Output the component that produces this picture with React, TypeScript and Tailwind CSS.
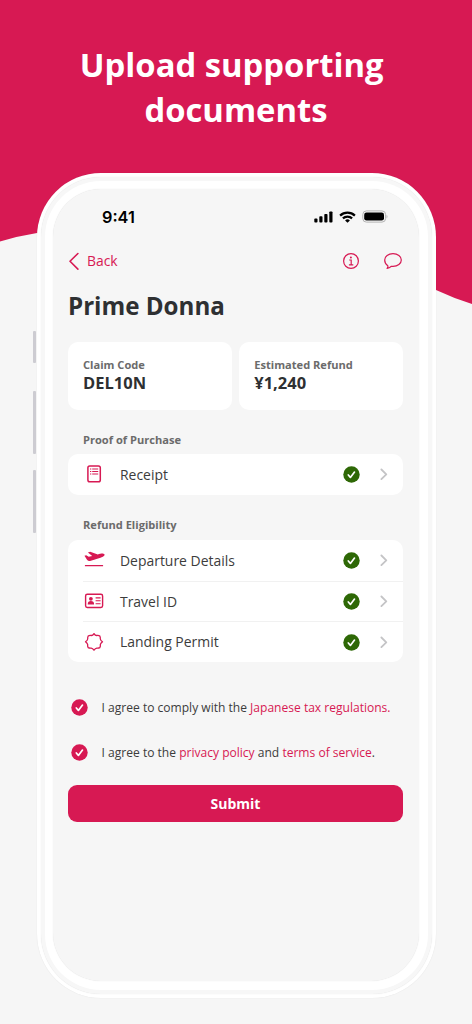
import React from 'react'

interface RowProps {
    icon: React.ReactNode;
    label: string;
    divider?: boolean;
}

const CheckCircle = ({ className }: { className: string }) => (
    <svg viewBox="0 0 17 17" className={`size-[17px] shrink-0 ${className}`}>
        <circle cx="8.5" cy="8.5" r="8.2" fill="currentColor" />
        <path d="M5.3 9l2.1 2.4 4.1-5.3" fill="none" stroke="#fff" strokeWidth="1.7" strokeLinecap="round" strokeLinejoin="round" />
    </svg>
)

const ChevronIcon = () => (
    <svg viewBox="0 0 8 12" className="ml-5 h-3 w-2 shrink-0 text-[#c4c4c6]">
        <path d="M1.4 1.5L6.3 6.3l-4.9 4.8" fill="none" stroke="currentColor" strokeWidth="1.8" strokeLinecap="round" strokeLinejoin="round" />
    </svg>
)

const ReceiptIcon = () => (
    <svg viewBox="0 0 22 20" className="h-5 w-[22px]" fill="none" stroke="currentColor">
        <rect x="4.9" y="2" width="12.4" height="15.8" rx="1.8" strokeWidth="1.5" />
        <path d="M7 5h1.3M7 7.5h1.3M7 10h1.3M9.2 5h6M9.2 7.5h6M9.2 10h6" strokeWidth="1.2" />
    </svg>
)

const DepartureIcon = () => (
    <svg viewBox="0 0 22 20" className="h-5 w-[22px]" fill="currentColor">
        <path d="M1.500 5.800l1.700-.5 2.500 1.500 3.500-.8-4.300-3.500 2.300-.8 7.600 2.900c1.900-.6 4.100-1.200 5.600-.9 1 .2 1.400.9 1.100 1.600-.5 1.200-2.600 2-4 2.400L7.900 10.700c-1.800.5-2.800.3-3.900-.9z" />
        <rect x="1.900" y="14.900" width="18.200" height="1.400" rx=".4" />
    </svg>
)

const IdCardIcon = () => (
    <svg viewBox="0 0 22 20" className="h-5 w-[22px]" fill="none" stroke="currentColor">
        <rect x="2.600" y="3.300" width="17" height="13.200" rx="1.700" strokeWidth="1.400" />
        <circle cx="7.900" cy="7.800" r="1.900" fill="currentColor" stroke="none" />
        <path d="M4.700 13.400c0-2.200 1.200-3.300 3.200-3.300s3.200 1.100 3.200 3.300z" fill="currentColor" stroke="none" />
        <path d="M12.600 6.900h5M12.600 9.800h5M12.600 12.700h5" strokeWidth="1.100" />
    </svg>
)

const SealIcon = () => (
    <svg viewBox="0 0 22 20" className="h-5 w-[22px]" fill="none" stroke="currentColor" strokeWidth="1.300" strokeLinejoin="round">
        <path d="M11 1.600Q12.200 3.600 13.800 3.500Q15.500 3.100 16.800 4Q17.500 5.500 17.300 7Q17.600 8.600 19.500 9.800Q17.700 11.200 17.300 12.700Q17.700 14.300 16.800 15.700Q15.400 16.400 13.800 16.100Q12.300 16.300 11 18.200Q9.700 16.300 8.200 16.100Q6.600 16.400 5.200 15.700Q4.300 14.300 4.700 12.700Q4.300 11.200 2.500 9.800Q4.400 8.600 4.700 7Q4.500 5.500 5.200 4Q6.500 3.100 8.200 3.500Q9.800 3.600 11 1.600Z" />
    </svg>
)

const InfoIcon = () => (
    <svg viewBox="0 0 18 18" className="size-[18px]" fill="none" stroke="currentColor">
        <circle cx="9" cy="9" r="7.400" strokeWidth="1.200" />
        <circle cx="8.900" cy="5.400" r="1" fill="currentColor" stroke="none" />
        <path d="M7.200 8h2v4.800M6.900 12.800h4.400" strokeWidth="1.200" />
    </svg>
)

const ChatIcon = () => (
    <svg viewBox="0 0 20 18" className="h-[18px] w-5" fill="none" stroke="currentColor" strokeWidth="1.200" strokeLinejoin="round">
        <path d="M10 1.600c4.700 0 8.300 2.700 8.300 6.300s-3.600 6.500-8.300 6.500c-.7 0-1.100 0-1.600-.1-1.200 1.100-2.800 2-4.300 2.100.7-.9 1-1.700.7-2.700C2.900 12.400 1.700 10.300 1.700 7.900c0-3.600 3.600-6.300 8.300-6.300z" />
    </svg>
)

const StatusBar = () => (
    <div className="flex h-[55px] items-center justify-between pr-[31px] pl-[49px]">
        <span className="pt-px font-['Inter'] text-[16.3px] font-semibold text-black">9:41</span>
        <div className="flex items-center gap-1.5">
            <svg viewBox="0 0 19 12" className="h-3 w-[19px]">
                <rect x="0.300" y="7.500" width="3.200" height="4" rx=".9" />
                <rect x="5.300" y="5.200" width="3.200" height="6.300" rx=".9" />
                <rect x="10.300" y="2.900" width="3.200" height="8.600" rx=".9" />
                <rect x="15.300" y=".4" width="3.200" height="11.100" rx=".9" />
            </svg>
            <svg viewBox="0 0 17 12" className="h-3 w-[17px]" fill="none" stroke="#000" strokeWidth="2.2">
                <path d="M1.100 4.600a10.600 10.600 0 0 1 14.800 0M3.900 7.400a6.700 6.700 0 0 1 9.200 0" />
                <path d="M8.500 11.800L6.100 9.500a3.400 3.400 0 0 1 4.800 0z" fill="#000" stroke="none" />
            </svg>
            <svg viewBox="0 0 26 13" className="h-[13px] w-[26px]">
                <rect x=".8" y=".9" width="22.800" height="11.200" rx="3.600" fill="none" stroke="#b4b4b4" />
                <rect x="2.200" y="2.400" width="19.800" height="8.200" rx="2.300" />
                <path d="M24.600 4.700c1.100.5 1.100 3.200 0 3.700z" fill="#aaa" />
            </svg>
        </div>
    </div>
)

const Row = ({ icon, label, divider }: RowProps) => (
    <div className={`ml-[15px] flex h-[40.8px] items-center pr-[15px] ${divider ? 'border-t border-[#f1f1f1]' : ''}`}>
        <span className="text-[#d71953]">{icon}</span>
        <span className={`ml-[15px] flex-1 text-[13.95px] text-[#3c3c3c] ${divider ? 'pt-px' : 'pt-0.5'}`}>{label}</span>
        <CheckCircle className="text-[#2e6806]" />
        <ChevronIcon />
    </div>
)

const InfoCard = ({ title, value }: { title: string; value: string }) => (
    <div className="flex h-[67.5px] flex-col rounded-[10px] bg-white pt-[14px] pl-[15px] font-bold">
        <span className="text-[11.1px] leading-[17px] text-[#6b6b6b]">{title}</span>
        <span className="text-[16.5px] leading-5 text-[#2e3032]">{value}</span>
    </div>
)

const SectionTitle = ({ children }: { children: React.ReactNode }) => (
    <h2 className="pl-[15px] text-[11.1px] leading-[17px] font-bold text-[#6b6b6b]">{children}</h2>
)

const App = () => {
    return (
        <div className="relative h-[1024px] w-[472px] overflow-hidden bg-[#f6f6f6] font-['Open_Sans',sans-serif]">
            <svg viewBox="0 0 472 320" className="absolute top-0 left-0 h-[320px] w-[472px]">
                <path d="M0 0h472v304q-19-6-36-14L300 238Q170 200 37 233Q18 236 0 241.5z" fill="#d71953" />
            </svg>

            <div className="relative flex flex-col items-center">
                <h1 className="h-[172.5px] pt-[42px] text-center text-[32.8px] leading-[45px] font-bold text-white">
                    Upload supporting&nbsp;<br />documents
                </h1>

                {/* phone frame */}
                <div className="relative w-[399px] rounded-[64px] bg-white p-1 shadow-[0_0_1px_rgba(0,0,0,0.12)]">
                    <div className="absolute top-[158px] -left-[3.5px] h-8 w-[3px] rounded-[1px] bg-[#cdccd2]" />
                    <div className="absolute top-[218px] -left-[3.5px] h-[63px] w-[3px] rounded-[1px] bg-[#cdccd2]" />
                    <div className="absolute top-[297.5px] -left-[3.5px] h-[63px] w-[3px] rounded-[1px] bg-[#cdccd2]" />

                    <div className="rounded-[60px] bg-[#f7f7f7] p-1 shadow-[0_0_1px_rgba(0,0,0,0.15)]">
                        <div className="rounded-[56px] bg-white p-[8.5px]">
                            <div className="h-[792px] rounded-[48px] bg-[#f6f6f6] shadow-[0_0_1px_rgba(0,0,0,0.15)]">
                                <StatusBar />

                                <div className="pr-4 pl-[15px]">
                                    <div className="flex h-[33px] items-center text-[#d71953]">
                                        <svg viewBox="0 0 12 18" className="h-[18px] w-3" fill="none" stroke="currentColor" strokeWidth="1.6" strokeLinecap="round" strokeLinejoin="round">
                                            <path d="M9.9 1.500L2 9.300l7.900 7.800" />
                                        </svg>
                                        <span className="ml-[7px] flex-1 pt-px text-[13.9px]">Back</span>
                                        <InfoIcon />
                                        <span className="ml-[23px] flex">
                                            <ChatIcon />
                                        </span>
                                    </div>

                                    <h2 className="mt-3 text-[24.15px] leading-[34px] font-bold text-[#2e3032]">Prime Donna</h2>

                                    <div className="mt-[19px] grid grid-cols-2 gap-[7.5px]">
                                        <InfoCard title="Claim Code" value="DEL10N" />
                                        <InfoCard title="Estimated Refund" value="¥1,240" />
                                    </div>

                                    <div className="mt-[21.5px]">
                                        <SectionTitle>Proof of Purchase</SectionTitle>
                                        <div className="mt-1.5 rounded-[10px] bg-white">
                                            <Row icon={<ReceiptIcon />} label="Receipt" />
                                        </div>
                                    </div>

                                    <div className="mt-[21.5px]">
                                        <SectionTitle>Refund Eligibility</SectionTitle>
                                        <div className="mt-[6.5px] rounded-[10px] bg-white">
                                            <Row icon={<DepartureIcon />} label="Departure Details" />
                                            <Row icon={<IdCardIcon />} label="Travel ID" divider />
                                            <Row icon={<SealIcon />} label="Landing Permit" divider />
                                        </div>
                                    </div>

                                    <div className="mt-[34px] flex flex-col gap-[22.5px] pl-[3px] text-[12.05px] leading-[22px] text-[#3c3c3c]">
                                        <div className="flex items-center">
                                            <CheckCircle className="text-[#d71953]" />
                                            <p className="ml-[13.6px] pt-px whitespace-nowrap">
                                                I agree to comply with the <a className="text-[#d71953]">Japanese tax regulations.</a>
                                            </p>
                                        </div>
                                        <div className="flex items-center">
                                            <CheckCircle className="text-[#d71953]" />
                                            <p className="ml-[13.6px] whitespace-nowrap">
                                                I agree to the <a className="text-[#d71953]">privacy policy</a> and <a className="text-[#d71953]">terms of service</a>.
                                            </p>
                                        </div>
                                    </div>

                                    <button className="mt-[21px] h-[37px] w-full rounded-[9px] bg-[#d71953] text-[14px] font-bold text-white">
                                        Submit
                                    </button>
                                </div>
                            </div>
                        </div>
                    </div>
                </div>
            </div>
        </div>
    )
}

export default App
